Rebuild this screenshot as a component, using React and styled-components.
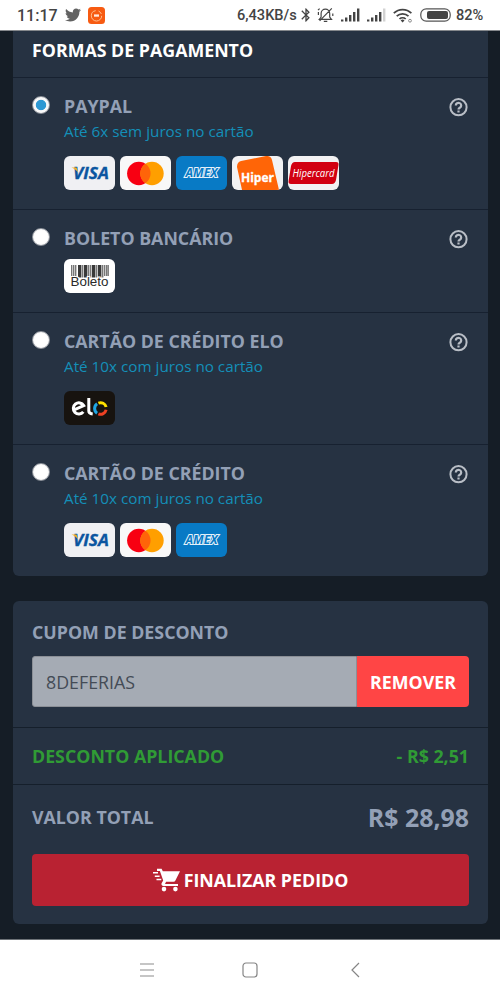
import React from "react";
import styled, { createGlobalStyle } from "styled-components";
import { FaTwitter } from "react-icons/fa";
import { MdBluetooth } from "react-icons/md";

const GlobalStyle = createGlobalStyle`
  * { box-sizing: border-box; }
  body { margin: 0; background: #151d26; font-family: "Open Sans", "Noto Sans", sans-serif; }
  svg { display: block; flex: none; }
`;

const Screen = styled.div`
  width: 500px;
  height: 1000px;
  display: flex;
  flex-direction: column;
  background: #151d26;
  overflow: hidden;
`;

const StatusBar = styled.header`
  height: 31px;
  flex: none;
  display: flex;
  justify-content: space-between;
  align-items: center;
  padding: 0 16px 0 17px;
  background: #fff;
  border-bottom: 1px solid #85888c;
  color: #444;
  font-family: Roboto, sans-serif;
  font-weight: 500;
`;

const StatusGroup = styled.div`
  display: flex;
  align-items: center;
`;

const Clock = styled.span`
  font-size: 16px;
  width: 48px;
`;

const StatusText = styled.span`
  font-size: 14.6px;
  width: ${(p) => p.$width}px;
  white-space: nowrap;
`;

const Content = styled.main`
  flex: none;
  height: 909px;
  padding: 0 12px 0 13px;
  display: flex;
  flex-direction: column;
  gap: 25px;
  border-bottom: 1px solid #6d7277;
`;

const Card = styled.section`
  background: #263242;
  border-radius: ${(p) => (p.$cut ? "0 0 6px 6px" : "6px")};
`;

const Heading = styled.h2`
  margin: 0;
  height: 46px;
  padding: 7px 19px 0;
  color: #fff;
  font-size: 17.8px;
  line-height: 24px;
  font-weight: 700;
`;

const Option = styled.div`
  display: flex;
  border-top: 1px solid #172130;
  padding: 16px 19px 19px;
`;

const Radio = styled.span`
  width: 18px;
  height: 18px;
  margin: 2px 14px 0 0;
  flex: none;
  border-radius: 50%;
  border: 1px solid #8f949c;
  background: ${(p) =>
    p.$checked
      ? "radial-gradient(circle, #2d98d3 0 4.8px, #f8f8f8 5.6px)"
      : "radial-gradient(circle, #fff 55%, #e4e4e4)"};
`;

const OptionBody = styled.div`
  flex: 1;
`;

const OptionTitle = styled.div`
  height: 24px;
  line-height: 24px;
  font-size: 17.8px;
  font-weight: 700;
  color: #93a0b6;
`;

const OptionNote = styled.div`
  height: 29px;
  line-height: 26px;
  font-size: 15.25px;
  color: #148fb8;
`;

const Badges = styled.div`
  display: flex;
  gap: 5px;
  padding-top: 9px;
`;

const Badge = styled.div`
  width: 51px;
  height: 34px;
  border-radius: 6px;
  overflow: hidden;
  background: ${(p) => p.$bg};
`;

const HelpMark = styled.svg`
  width: 19px;
  height: 19px;
  margin: 4px 1px 0 0;
  fill: none;
  stroke: #b9bec6;
  stroke-width: 2;
`;

const Coupon = styled.div`
  height: 126px;
  padding: 19px 19px 0;
`;

const Label = styled.span`
  display: block;
  font-size: 17.8px;
  line-height: 24px;
  font-weight: 700;
  color: ${(p) => (p.$green ? "#309b35" : "#93a0b6")};
`;

const CouponRow = styled.div`
  display: flex;
  height: 51px;
  margin-top: 12px;
`;

const CouponInput = styled.div`
  flex: 1;
  display: flex;
  align-items: center;
  padding-left: 13px;
  background: #a5abb4;
  border: 1px solid #8b8f96;
  border-radius: 3px 0 0 3px;
  color: #444b56;
  font-size: 17.8px;
`;

const RemoveButton = styled.button`
  width: 112px;
  padding: 0;
  border: 0;
  border-radius: 0 4px 4px 0;
  background: #ff4545;
  color: #fff;
  font: 700 17.8px "Open Sans", sans-serif;
`;

const SummaryRow = styled.div`
  display: flex;
  justify-content: space-between;
  align-items: center;
  height: ${(p) => p.$height}px;
  padding: 0 19px;
  border-top: 1px solid #151f2b;
`;

const Total = styled.span`
  font-size: 24.9px;
  line-height: 30px;
  font-weight: 700;
  color: #93a0b6;
`;

const Submit = styled.button`
  display: flex;
  align-items: center;
  justify-content: center;
  gap: 4px;
  width: 437px;
  height: 52px;
  margin: 6px 19px 18px;
  padding: 0;
  border: 0;
  border-radius: 4px;
  background: #b92232;
  color: #fff;
  font: 700 17.8px "Open Sans", sans-serif;
`;

const NavBar = styled.nav`
  flex: 1;
  display: flex;
  align-items: center;
  justify-content: center;
  gap: 87px;
  background: #fff;
`;

const Visa = () => (
  <Badge $bg="#f0f0f3">
    <svg width="51" height="34">
      <text x="9" y="23" textLength="36" lengthAdjust="spacingAndGlyphs" fontFamily="Open Sans" fontWeight="700" fontStyle="italic" fontSize="16" fill="#0b55a0" stroke="#0b55a0" strokeWidth=".3">VISA</text>
      <path d="M7.5 11.5h5l1.7 5.2c-1.5-2.4-3.7-4-6.7-5.2z" fill="#f3b229" />
    </svg>
  </Badge>
);

const Mastercard = () => (
  <Badge $bg="#f8f8f8">
    <svg width="51" height="34">
      <circle cx="18.8" cy="17.5" r="11.7" fill="#f80012" />
      <circle cx="32" cy="17.5" r="11.7" fill="#ff9f00" />
      <path d="M25.4 7.8a11.7 11.7 0 0 1 0 19.4a11.7 11.7 0 0 1 0-19.4z" fill="#ff6409" />
    </svg>
  </Badge>
);

const Amex = () => (
  <Badge $bg="#087ac5">
    <svg width="51" height="34">
      <text x="9.5" y="21.3" textLength="32" lengthAdjust="spacingAndGlyphs" fontFamily="Open Sans" fontWeight="700" fontStyle="italic" fontSize="12" fill="#087ac5" stroke="#e4f1fa" strokeWidth="2" paintOrder="stroke">AMEX</text>
    </svg>
  </Badge>
);

const Hiper = () => (
  <Badge $bg="#f2f2f3">
    <svg width="51" height="34">
      <path d="M5 11Q5 6 9 5L34 0Q39-.5 40 4L47 34H10z" fill="#ff6507" />
      <text x="9" y="25.5" textLength="33" lengthAdjust="spacingAndGlyphs" fontFamily="Open Sans" fontWeight="700" fontSize="13" fill="#fff" stroke="#fff" strokeWidth=".3">Hiper</text>
    </svg>
  </Badge>
);

const Hipercard = () => (
  <Badge $bg="#f2f2f3">
    <svg width="51" height="34">
      <path d="M7 6H48Q51 6 50.5 9L48 24Q47 28 44 28H3Q0 28 .6 25L3 10Q4 6 7 6z" fill="#d20011" />
      <text x="4.5" y="20.5" textLength="42" lengthAdjust="spacingAndGlyphs" fontFamily="Open Sans" fontStyle="italic" fontSize="10.8" fill="#fff">Hipercard</text>
    </svg>
  </Badge>
);

const BARS = [[7, 1], [9, 1], [11, 1], [14, 3], [18, 1], [20, 3], [24, 1], [26, 1], [28, 3], [32, 1], [34, 3], [38, 1], [40, 1], [42, 1], [43.5, 1]];

const Boleto = () => (
  <Badge $bg="#fff">
    <svg width="51" height="34">
      {BARS.map(([x, w], i) => (
        <rect key={x} x={x} y="6" width={w + 0.4} height={i < 2 || i > 11 ? 11 : 12.5} fill={w > 1 ? "#393939" : "#777"} />
      ))}
      <text x="6.5" y="26.5" textLength="38" lengthAdjust="spacingAndGlyphs" fontFamily="Liberation Sans" fontSize="12" fill="#2a2a2a" stroke="#fff" strokeWidth="2" paintOrder="stroke">Boleto</text>
    </svg>
  </Badge>
);

const Elo = () => (
  <Badge $bg="#17130f">
    <svg width="51" height="34" fill="none" strokeWidth="3">
      <path d="M19.3 20.9A5.6 5.6 0 1 1 19.7 14.5L9.5 19.2" stroke="#fff" />
      <path d="M24.8 7V20Q24.8 22.5 28.7 23" stroke="#fff" />
      <path d="M33.1 12.8A5.7 5.7 0 0 0 33.1 22.2" stroke="#20a7e4" />
      <path d="M34.4 12.1A5.7 5.7 0 0 1 42.1 16" stroke="#ffe000" />
      <path d="M42.1 18.8A5.7 5.7 0 0 1 34.4 22.9" stroke="#ee4123" />
    </svg>
  </Badge>
);

const OPTIONS = [
  { title: "PAYPAL", note: "Até 6x sem juros no cartão", badges: [Visa, Mastercard, Amex, Hiper, Hipercard], checked: true },
  { title: "BOLETO BANCÁRIO", badges: [Boleto] },
  { title: "CARTÃO DE CRÉDITO ELO", note: "Até 10x com juros no cartão", badges: [Elo] },
  { title: "CARTÃO DE CRÉDITO", note: "Até 10x com juros no cartão", badges: [Visa, Mastercard, Amex] },
];

const HelpIcon = () => (
  <HelpMark viewBox="0 0 19 19">
    <circle cx="9.5" cy="9.2" r="8.1" />
    <path d="M6.8 7.5a2.7 2.6 0 1 1 4.2 2.1c-.9.6-1.5.9-1.5 1.9M9.5 12.5v1.9" strokeWidth="2.2" />
  </HelpMark>
);

const AppTile = () => (
  <svg width="17" height="17" viewBox="0 0 17 17">
    <rect width="17" height="17" rx="3.5" fill="#f75b12" />
    <circle cx="8.5" cy="8.8" r="5.2" fill="none" stroke="#ffc08f" strokeWidth="1" strokeDasharray="23 3 4 3" />
    <path d="M6 7.4h5v2.3h-5z" fill="#ffe9dc" />
  </svg>
);

const MutedBell = () => (
  <svg width="17" height="16" viewBox="0 0 17 16" fill="none" stroke="#444" strokeWidth="1.2">
    <path d="M3 12.3h11.5L12.7 10V6.5a4.3 4.3 0 0 0-8.6 0V10L2.3 12.3zM6.8 14.3h3.5M14.8 1.4 2.6 13.8" />
    <path d="M1.4 5v3M2.6 1.6 1 3.2M15.8 6.5v2.5" />
  </svg>
);

const Signal = ({ faded }) => (
  <svg width="19" height="14" fill="#444">
    <rect x="0" y="11.5" width="2.4" height="2" />
    <rect x="4" y="9.5" width="2.4" height="4" />
    <rect x="8" y="7" width="2.4" height="6.5" />
    <rect x="12" y="4" width="2.4" height="9.5" />
    <rect x="16" y="0.5" width="2.4" height="13" fill={faded ? "#d2d2d2" : "#444"} />
  </svg>
);

const Wifi = () => (
  <svg width="20" height="15" viewBox="0 0 20 15" fill="none" stroke="#444" strokeWidth="1.7">
    <path d="M.8 5.2a12.6 12.6 0 0 1 17.6 0M3.7 8.2a8.4 8.4 0 0 1 11.8 0M6.5 11a4.5 4.5 0 0 1 6.2 0" />
    <path d="M7.7 12.4a3 3 0 0 1 3.8 0l-1.9 2z" fill="#444" stroke="none" />
    <circle cx="17" cy="12.7" r="1.4" stroke="#888" strokeWidth="1" />
  </svg>
);

const Battery = () => (
  <svg width="31" height="14" viewBox="0 0 31 14">
    <rect x=".8" y=".8" width="29.4" height="12.4" rx="5.5" fill="none" stroke="#555" strokeWidth="1.2" />
    <rect x="7" y="3" width="21" height="8" rx="2" fill="#444" />
  </svg>
);

const CartIcon = () => (
  <svg width="27" height="24" viewBox="0 0 27 24" fill="#fff">
    <path d="M4 .8h4.6l1.2 2.5H27l-4.6 9.2c-.4.8-1 1.2-1.9 1.2h-7.4l-1.1 2.2h13v2.2H10.6c-1.8 0-2.7-1.6-1.9-3l1.5-2.7L6.9 3H4z" />
    <path d="M0 4h5v1.5H0zM1.8 7.4h4.8v1.5H1.8zM3.5 10.8h4.8v1.5H3.5z" />
    <circle cx="11" cy="21.1" r="2.3" />
    <circle cx="22.4" cy="21.1" r="2.3" />
  </svg>
);

const TwitterIcon = styled(FaTwitter)`
  width: 16px;
  height: 16px;
  margin-right: 7px;
  color: #626262;
`;

const BluetoothIcon = styled(MdBluetooth)`
  width: 16px;
  height: 18px;
  margin-right: 3px;
`;

const Space = styled.span`
  width: ${(p) => p.$w}px;
`;

export default function App() {
  return (
    <Screen>
      <GlobalStyle />
      <StatusBar>
        <StatusGroup>
          <Clock>11:17</Clock>
          <TwitterIcon />
          <AppTile />
        </StatusGroup>
        <StatusGroup>
          <StatusText $width={61}>6,43KB/s</StatusText>
          <BluetoothIcon />
          <MutedBell />
          <Space $w={7} />
          <Signal />
          <Space $w={7} />
          <Signal faded />
          <Space $w={7} />
          <Wifi />
          <Space $w={7} />
          <Battery />
          <Space $w={5} />
          <StatusText $width={28}>82%</StatusText>
        </StatusGroup>
      </StatusBar>

      <Content>
        <Card $cut>
          <Heading>FORMAS DE PAGAMENTO</Heading>
          {OPTIONS.map(({ title, note, badges, checked }) => (
            <Option key={title}>
              <Radio $checked={checked} />
              <OptionBody>
                <OptionTitle>{title}</OptionTitle>
                {note && <OptionNote>{note}</OptionNote>}
                <Badges>
                  {badges.map((Logo, i) => (
                    <Logo key={i} />
                  ))}
                </Badges>
              </OptionBody>
              <HelpIcon />
            </Option>
          ))}
        </Card>

        <Card>
          <Coupon>
            <Label>CUPOM DE DESCONTO</Label>
            <CouponRow>
              <CouponInput>8DEFERIAS</CouponInput>
              <RemoveButton>REMOVER</RemoveButton>
            </CouponRow>
          </Coupon>
          <SummaryRow $height={57}>
            <Label $green>DESCONTO APLICADO</Label>
            <Label $green>- R$ 2,51</Label>
          </SummaryRow>
          <SummaryRow $height={64}>
            <Label>VALOR TOTAL</Label>
            <Total>R$ 28,98</Total>
          </SummaryRow>
          <Submit>
            <CartIcon />
            FINALIZAR PEDIDO
          </Submit>
        </Card>
      </Content>

      <NavBar>
        <svg width="16" height="16" stroke="#8b8b8b" strokeWidth="1.2">
          <path d="M1 2h14M1 8h14M1 14h14" />
        </svg>
        <svg width="16" height="16" fill="none" stroke="#858585" strokeWidth="1.2">
          <rect x="1" y="1" width="14" height="14" rx="3" />
        </svg>
        <svg width="16" height="16" fill="none" stroke="#858585" strokeWidth="1.2">
          <path d="M14 1 7 8l7 7" />
        </svg>
      </NavBar>
    </Screen>
  );
}
